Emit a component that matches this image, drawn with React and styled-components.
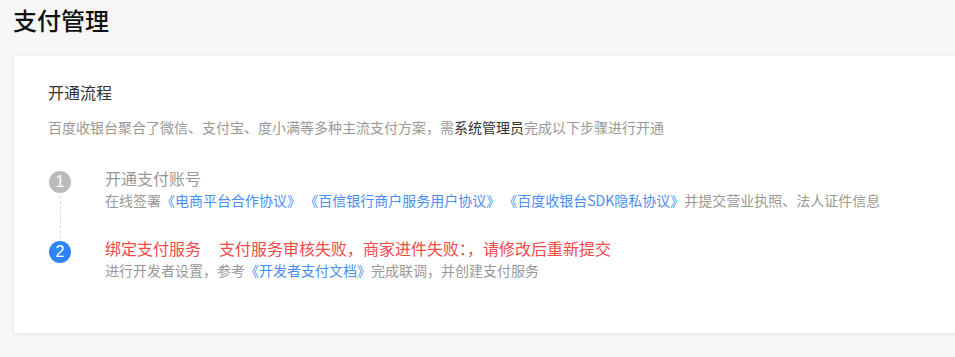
import React from "react";
import styled, { createGlobalStyle } from "styled-components";

const Global = createGlobalStyle`
  html, body { margin: 0; padding: 0; background: #f7f7f7; overflow: hidden; }
  body { font-family: "Noto Sans CJK SC", "Noto Sans", sans-serif; }
`;

const Page = styled.div`
  padding: 4px 0 40px 13px;
  background: #f7f7f7;
  min-height: 357px;
  box-sizing: border-box;
`;

const Title = styled.h1`
  margin: 0;
  font-size: 24px;
  line-height: 32px;
  font-weight: 500;
  color: #111;
`;

const Card = styled.section`
  margin: 20px 0 0 1px;
  width: 980px;
  background: #fff;
  box-shadow: 0 1px 4px rgba(0, 0, 0, 0.08);
  border-radius: 2px;
  padding: 24px 34px 53px;
  box-sizing: border-box;
`;

const CardTitle = styled.h2`
  margin: 0;
  font-size: 16px;
  line-height: 24px;
  font-weight: 400;
  color: #333;
`;

const Desc = styled.p`
  margin: 13px 0 0;
  font-size: 14px;
  line-height: 20px;
  color: #999;
`;

const Strong = styled.span`
  color: #333;
`;

const Steps = styled.div`
  margin-top: 29px;
  display: flex;
  flex-direction: column;
`;

const Step = styled.div`
  display: flex;
  gap: 34px;
`;

const Indicator = styled.div`
  flex: none;
  width: 22px;
  margin-left: 1px;
  display: flex;
  flex-direction: column;
  align-items: center;
  padding-top: 5px;
`;

const Circle = styled.div`
  width: 22px;
  height: 22px;
  border-radius: 50%;
  background: ${(p) => (p.$active ? "#2e84f6" : "#bbbbbb")};
  color: #fff;
  font-family: "Liberation Sans", Arial, sans-serif;
  font-size: 16px;
  font-weight: 400;
  line-height: 22px;
  text-align: center;
  flex: none;
`;

const Connector = styled.div`
  flex: 1;
  width: 0;
  border-left: 1px dashed #dcdcdc;
  margin: 3px 0 -2px;
`;

const Content = styled.div`
  display: flex;
  flex-direction: column;
  padding-bottom: ${(p) => (p.$last ? "0" : "26px")};
`;

const StepTitle = styled.div`
  font-size: 16px;
  line-height: 24px;
  color: ${(p) => (p.$error ? "#f5484a" : "#999")};
`;

const ErrorNote = styled.span`
  margin-left: 18px;
`;

const StepDesc = styled.div`
  font-size: 14px;
  line-height: 20px;
  color: #999;
  white-space: pre;
`;

const Link = styled.a`
  color: #4a8df6;
  text-decoration: none;
  cursor: pointer;
`;

export default function App() {
  return (
    <>
      <Global />
      <Page>
        <Title>支付管理</Title>
        <Card>
          <CardTitle>开通流程</CardTitle>
          <Desc>
            百度收银台聚合了微信、支付宝、度小满等多种主流支付方案，需<Strong>系统管理员</Strong>完成以下步骤进行开通
          </Desc>
          <Steps>
            <Step>
              <Indicator>
                <Circle>1</Circle>
                <Connector />
              </Indicator>
              <Content>
                <StepTitle>开通支付账号</StepTitle>
                <StepDesc>
                  在线签署<Link>《电商平台合作协议》</Link>{" "}
                  <Link>《百信银行商户服务用户协议》</Link>{" "}
                  <Link>《百度收银台SDK隐私协议》</Link>并提交营业执照、法人证件信息
                </StepDesc>
              </Content>
            </Step>
            <Step>
              <Indicator>
                <Circle $active>2</Circle>
              </Indicator>
              <Content $last>
                <StepTitle $error>
                  绑定支付服务
                  <ErrorNote>支付服务审核失败，商家进件失败：，请修改后重新提交</ErrorNote>
                </StepTitle>
                <StepDesc>
                  进行开发者设置，参考<Link>《开发者支付文档》</Link>完成联调，并创建支付服务
                </StepDesc>
              </Content>
            </Step>
          </Steps>
        </Card>
      </Page>
    </>
  );
}
